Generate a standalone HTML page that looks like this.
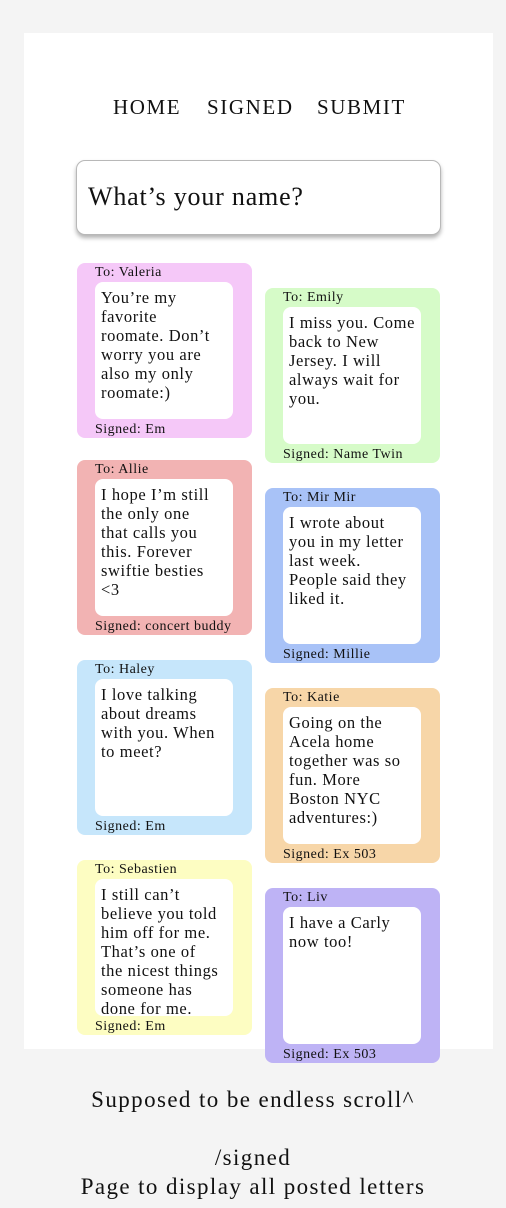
<!DOCTYPE html>
<html><head><meta charset="utf-8"><style>
*{margin:0;padding:0;box-sizing:border-box}
body{width:506px;height:1208px;background:#f4f4f4;position:relative;overflow:hidden;font-family:"Liberation Serif",serif;color:#111}
.panel{position:absolute;left:24px;top:33px;width:469px;height:1016px;background:#fff}
.nav{position:absolute;top:95px;font-size:21px;letter-spacing:1.6px}
.inp{position:absolute;left:76px;top:160px;width:365px;height:75px;border:1px solid #b8b8b8;border-radius:9px;background:#fff;box-shadow:0 3px 4px rgba(0,0,0,.3);padding:21px 0 0 11px;font-size:26px;letter-spacing:0.8px}
.card{position:absolute;width:175px;height:175px;border-radius:8px}
.card .to{position:absolute;left:18px;top:2px;font-size:14px;letter-spacing:0.5px}
.card .box{position:absolute;left:18px;top:19px;width:138px;height:137px;background:#fff;border-radius:8px;padding:6px 6px;line-height:19px;font-size:16.5px;letter-spacing:0.6px;white-space:nowrap}
.card .sig{position:absolute;left:18px;top:159px;font-size:14px;letter-spacing:0.5px}
.L{left:77px}.R{left:265px}
.foot{position:absolute;left:0;width:506px;text-align:center;font-size:23px;letter-spacing:1.4px}
</style></head><body>
<div class="panel"></div>
<div class="nav" style="left:113px">HOME</div>
<div class="nav" style="left:207px">SIGNED</div>
<div class="nav" style="left:317px">SUBMIT</div>
<div class="inp">What’s your name?</div>

<div class="card L" style="top:263px;background:#f5c8f8"><div class="to">To: Valeria</div><div class="box">You’re my<br>favorite<br>roomate. Don’t<br>worry you are<br>also my only<br>roomate:)</div><div class="sig">Signed: Em</div></div>
<div class="card L" style="top:460px;background:#f2b3b3"><div class="to">To: Allie</div><div class="box">I hope I’m still<br>the only one<br>that calls you<br>this. Forever<br>swiftie besties<br>&lt;3</div><div class="sig">Signed: concert buddy</div></div>
<div class="card L" style="top:660px;background:#c6e6fb"><div class="to">To: Haley</div><div class="box">I love talking<br>about dreams<br>with you. When<br>to meet?</div><div class="sig">Signed: Em</div></div>
<div class="card L" style="top:860px;background:#fdfdc2"><div class="to">To: Sebastien</div><div class="box">I still can’t<br>believe you told<br>him off for me.<br>That’s one of<br>the nicest things<br>someone has<br>done for me.</div><div class="sig">Signed: Em</div></div>

<div class="card R" style="top:288px;background:#d6fbc8"><div class="to">To: Emily</div><div class="box">I miss you. Come<br>back to New<br>Jersey. I will<br>always wait for<br>you.</div><div class="sig">Signed: Name Twin</div></div>
<div class="card R" style="top:488px;background:#a8c2f7"><div class="to">To: Mir Mir</div><div class="box">I wrote about<br>you in my letter<br>last week.<br>People said they<br>liked it.</div><div class="sig">Signed: Millie</div></div>
<div class="card R" style="top:688px;background:#f7d6a8"><div class="to">To: Katie</div><div class="box">Going on the<br>Acela home<br>together was so<br>fun. More<br>Boston NYC<br>adventures:)</div><div class="sig">Signed: Ex 503</div></div>
<div class="card R" style="top:888px;background:#beb3f5"><div class="to">To: Liv</div><div class="box">I have a Carly<br>now too!</div><div class="sig">Signed: Ex 503</div></div>

<div class="foot" style="top:1087px">Supposed to be endless scroll^</div>
<div class="foot" style="top:1145px">/signed</div>
<div class="foot" style="top:1174px">Page to display all posted letters</div>
</body></html>
